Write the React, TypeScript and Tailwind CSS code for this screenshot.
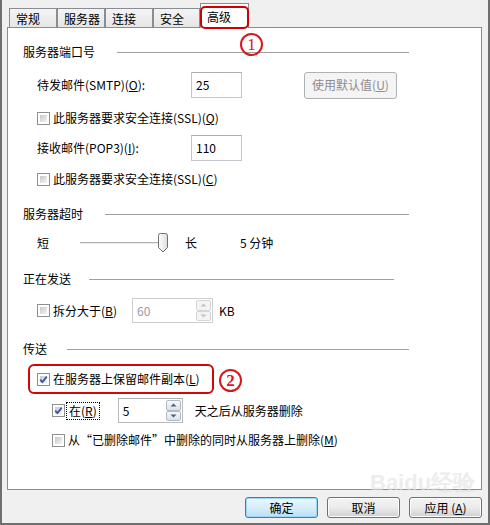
import type { ReactNode } from "react";

function CheckBox({ checked = false }: { checked?: boolean }) {
  return (
    <span className="relative inline-block h-[13px] w-[13px] shrink-0 border border-[#8e8f8f] bg-white p-[2px]">
      <span className="block h-full w-full bg-linear-to-br from-[#c4c8ce] to-[#f4f4f4]" />
      {checked && (
        <svg
          className="absolute left-0 top-0"
          width="11"
          height="11"
          viewBox="0 0 11 11"
        >
          <path
            d="M2.2 5.6 L4.4 8 L8.8 2.6"
            fill="none"
            stroke="#3d5b9c"
            strokeWidth="1.9"
          />
        </svg>
      )}
    </span>
  );
}

function GroupHeader({ title, lineClass }: { title: string; lineClass: string }) {
  return (
    <div className="flex h-[18px] items-center">
      <span>{title}</span>
      <span className={lineClass} />
    </div>
  );
}

function TextBox({ value }: { value: string }) {
  return (
    <div className="flex h-[26px] w-[51px] items-center border border-[#c2c6cc] border-t-[#abadb3] bg-white pl-[4px]">
      {value}
    </div>
  );
}

function Arrow({ up, color }: { up: boolean; color: string }) {
  return (
    <svg width="7" height="4" viewBox="0 0 7 4">
      <path d={up ? "M0.5 3.5 L3.5 0.5 L6.5 3.5 Z" : "M0.5 0.5 L3.5 3.5 L6.5 0.5 Z"} fill={color} />
    </svg>
  );
}

function SpinBox({
  value,
  disabled = false,
  className,
}: {
  value: string;
  disabled?: boolean;
  className: string;
}) {
  const btn = disabled
    ? "flex flex-1 items-center justify-center rounded-[2px] border border-[#d6d6d6] bg-[#f4f4f4]"
    : "flex flex-1 items-center justify-center rounded-[2px] border border-[#b4b9c1] bg-linear-to-b from-[#f6f7f9] to-[#dde1e6]";
  const arrow = disabled ? "#c4c4c4" : "#4a5f82";
  return (
    <div
      className={`${className} flex h-[25px] border bg-white p-px ${
        disabled ? "border-[#cfcfcf] text-[#9c9c9c]" : "border-[#b7bbc2] border-t-[#abadb3]"
      }`}
    >
      <span className="flex flex-1 items-center pl-[3px]">{value}</span>
      <div className="flex w-[15px] flex-col">
        <div className={btn}>
          <Arrow up color={arrow} />
        </div>
        <div className={btn}>
          <Arrow up={false} color={arrow} />
        </div>
      </div>
    </div>
  );
}

function WinButton({ children, focused = false }: { children: ReactNode; focused?: boolean }) {
  return (
    <button
      className={`flex h-[21px] w-[73px] items-center justify-center rounded-[3px] border ${
        focused
          ? "border-[#3c7fb1] bg-linear-to-b from-[#ecf7fd] via-[#d6eefb] to-[#b9e0f6] shadow-[inset_0_0_0_1px_#9fd6f5]"
          : "border-[#707070] bg-linear-to-b from-[#f3f3f3] via-[#ebebeb] to-[#d0d0d0] shadow-[inset_0_0_0_1px_#fcfcfc]"
      }`}
    >
      {children}
    </button>
  );
}

function Circled({ n, bold = false }: { n: string; bold?: boolean }) {
  return (
    <span
      className={`inline-flex h-[23px] w-[23px] items-center justify-center rounded-full border-[#d8171a] font-['Liberation_Serif',serif] text-[17px] leading-none text-[#d8171a] ${
        bold ? "border-[2.5px] font-bold" : "border-2"
      }`}
    >
      {n}
    </span>
  );
}

const tabs = ["常规", "服务器", "连接", "安全"];
const tabWidths = ["w-[48px]", "w-[48px]", "w-[48px]", "w-[47px]"];

export default function App() {
  return (
    <div className="relative flex h-[525px] w-[490px] flex-col border-x-2 border-b-2 border-[#6f6f6f] bg-[#f0f0f0] font-['Noto_Sans_CJK_SC',sans-serif] text-[12px] leading-[18px] text-black">
      {/* tab strip */}
      <div className="relative z-10 flex h-[27px] items-end pl-[7px]">
        {tabs.map((t, i) => (
          <div
            key={t}
            className={`${tabWidths[i]} flex h-[19px] items-center border border-b-0 border-[#898c95] bg-linear-to-b from-[#f4f4f4] to-[#e6e6e6] pl-[6px] pt-px`}
          >
            {t}
          </div>
        ))}
        <div className="relative -mb-px flex h-[25px] w-[49px] items-center border border-b-0 border-[#898c95] bg-white pl-[6px] pt-[2px]">
          高级
          <span className="absolute -left-px -right-px top-[2px] -bottom-px rounded-[5px] border-2 border-[#d10000]" />
        </div>
      </div>

      {/* tab page */}
      <div className="ml-[5px] h-[463px] w-[475px] border border-[#898c95] bg-white">
        <div className="flex flex-col pl-[15px] pt-[15px]">
          <GroupHeader title="服务器端口号" lineClass="ml-[22px] mr-[72px] h-px flex-1 bg-[#a0a0a0]" />

          <div className="mt-[11px] flex h-[26px] items-center pl-[14px]">
            <span className="w-[154px]">
              待发邮件(SMTP)(<u>O</u>):
            </span>
            <TextBox value="25" />
            <button className="ml-[62px] flex h-[27px] w-[93px] items-center justify-center rounded-[3px] border border-[#adb2b5] bg-[#f4f4f4] text-[#8d8d8d]">
              使用默认值(<u>U</u>)
            </button>
          </div>

          <div className="mt-[11px] flex h-[18px] items-center gap-[3px] pl-[14px]">
            <CheckBox />
            <span>
              此服务器要求安全连接(SSL)(<u>Q</u>)
            </span>
          </div>

          <div className="mt-[8px] flex h-[25px] items-center pl-[14px]">
            <span className="w-[154px]">
              接收邮件(POP3)(<u>I</u>):
            </span>
            <TextBox value="110" />
          </div>

          <div className="mt-[10px] flex h-[18px] items-center gap-[3px] pl-[14px]">
            <CheckBox />
            <span>
              此服务器要求安全连接(SSL)(<u>C</u>)
            </span>
          </div>

          <div className="mt-[17px]">
            <GroupHeader title="服务器超时" lineClass="ml-[22px] mr-[72px] h-px flex-1 bg-[#a0a0a0]" />
          </div>

          <div className="mt-[10px] flex h-[20px] items-center pl-[14px]">
            <span className="w-[43px]">短</span>
            <svg width="88" height="20" viewBox="0 0 88 20">
              <line x1="0" y1="9.5" x2="80" y2="9.5" stroke="#b3b3b3" />
              <line x1="0" y1="10.5" x2="80" y2="10.5" stroke="#e9e9e9" />
              <defs>
                <linearGradient id="thumb" x1="0" y1="0" x2="1" y2="0">
                  <stop offset="0" stopColor="#ffffff" />
                  <stop offset="1" stopColor="#dcdcdc" />
                </linearGradient>
              </defs>
              <path
                d="M78.5 2.5 Q78.5 0.5 80.5 0.5 H85.5 Q87.5 0.5 87.5 2.5 V14.5 L83 19 L78.5 14.5 Z"
                fill="url(#thumb)"
                stroke="#6f6f6f"
              />
            </svg>
            <span className="ml-[17px]">长</span>
            <span className="ml-[43px]">5 分钟</span>
          </div>

          <div className="mt-[17px]">
            <GroupHeader title="正在发送" lineClass="ml-[18px] mr-[87px] h-px flex-1 bg-[#a0a0a0]" />
          </div>

          <div className="mt-[10px] flex h-[25px] items-center pl-[14px]">
            <div className="flex w-[95px] items-center gap-[3px]">
              <CheckBox />
              <span>
                拆分大于(<u>B</u>)
              </span>
            </div>
            <SpinBox value="60" disabled className="w-[81px]" />
            <span className="ml-[6px]">KB</span>
          </div>

          <div className="mt-[17px]">
            <GroupHeader title="传送" lineClass="ml-[20px] mr-[72px] h-px flex-1 bg-[#a0a0a0]" />
          </div>

          <div className="mt-[6px] flex h-[30px] items-center">
            <div className="ml-[5px] flex h-[30px] w-[186px] items-center gap-[3px] rounded-[6px] border-2 border-[#cc0a0a] pl-[7px]">
              <CheckBox checked />
              <span>
                在服务器上保留邮件副本(<u>L</u>)
              </span>
            </div>
            <span className="ml-[5px] mt-[3px]">
              <Circled n="2" bold />
            </span>
          </div>

          <div className="mt-[4px] flex h-[25px] items-center pl-[29px]">
            <CheckBox checked />
            <span className="ml-px border border-dotted border-black px-[2px] leading-[16px]">
              在(<u>R</u>)
            </span>
            <SpinBox value="5" className="ml-[18px] w-[65px]" />
            <span className="ml-[12px]">天之后从服务器删除</span>
          </div>

          <div className="mt-[8px] flex h-[18px] items-center gap-[3px] pl-[29px]">
            <CheckBox />
            <span>
              从“已删除邮件”中删除的同时从服务器上删除(<u>M</u>)
            </span>
          </div>
        </div>
      </div>

      {/* dialog buttons */}
      <div className="mt-[7px] flex justify-end gap-[9px] pr-[6px]">
        <WinButton focused>确定</WinButton>
        <WinButton>取消</WinButton>
        <WinButton>
          应用 (<u>A</u>)
        </WinButton>
      </div>

      {/* annotation ① */}
      <span className="absolute left-[238px] top-[33px]">
        <Circled n="1" />
      </span>

      {/* watermark */}
      <span className="pointer-events-none absolute left-[368px] top-[472px] font-['Liberation_Sans',sans-serif] text-[22px] font-bold leading-none text-[#e2e2e2] opacity-60">
        Baidu经验
      </span>
    </div>
  );
}
